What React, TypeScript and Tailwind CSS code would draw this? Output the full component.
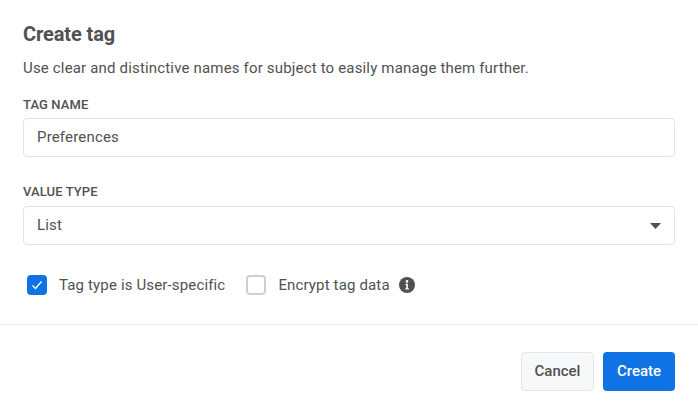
export default function App() {
  return (
    <div className="w-[698px] h-[415px] bg-white text-[#515151] overflow-hidden font-['Roboto',sans-serif]">
      <div className="pt-[22px] px-[23px] h-[325px] border-b border-[#e9e9e9]">
        <h2 className="text-[20px] leading-[24px] font-bold tracking-[-0.1px]">Create tag</h2>
        <p className="mt-[12px] text-[15px] leading-[20px] tracking-[0.17px]">
          Use clear and distinctive names for subject to easily manage them further.
        </p>
        <label className="block mt-[18px] text-[13px] leading-[18px] font-medium tracking-[0.1px]">TAG NAME</label>
        <div className="mt-[4px] h-[39px] flex items-center px-[13px] rounded border border-[#e4e4e4] text-[15px] tracking-[0.17px]">
          Preferences
        </div>
        <label className="block mt-[26px] text-[13px] leading-[18px] font-medium tracking-[0.1px]">VALUE TYPE</label>
        <div className="mt-[5px] h-[39px] flex items-center justify-between pl-[13px] pr-[13px] rounded border border-[#e4e4e4] text-[15px] tracking-[0.17px]">
          <span>List</span>
          <svg width="11" height="6" viewBox="0 0 11 6" className="fill-[#515151]">
            <path d="M0 0h11L5.5 6z" />
          </svg>
        </div>
        <div className="mt-[29px] ml-[4px] flex items-center text-[15px] tracking-[0.15px]">
          <span className="w-[20px] h-[20px] rounded bg-[#0f73e6] flex items-center justify-center">
            <svg width="14" height="14" viewBox="0 0 14 14" fill="none" stroke="white" strokeWidth="1.4">
              <path d="M2.5 7.5l3 3 6-7" />
            </svg>
          </span>
          <span className="ml-[12px]">Tag type is User-specific</span>
          <span className="ml-[21px] w-[20px] h-[20px] rounded border-2 border-[#cfcfcf]" />
          <span className="ml-[12px]">Encrypt tag data</span>
          <svg width="16" height="16" viewBox="0 0 16 16" className="ml-[9px]">
            <circle cx="8" cy="8" r="8" fill="#515151" />
            <circle cx="8" cy="4.4" r="1.3" fill="white" />
            <path d="M6.4 6.7h2.5v4.6h1v1.2H6.3v-1.2h1V7.9H6.4z" fill="white" />
          </svg>
        </div>
      </div>
      <div className="flex justify-end gap-[9px] pt-[27px] pr-[23px]">
        <button className="w-[73px] h-[39px] rounded border border-[#e4e6e8] bg-[#f7f8f9] text-[15px] font-medium">
          Cancel
        </button>
        <button className="w-[72px] h-[39px] rounded bg-[#0f73e6] text-white text-[15px] font-medium">
          Create
        </button>
      </div>
    </div>
  );
}
